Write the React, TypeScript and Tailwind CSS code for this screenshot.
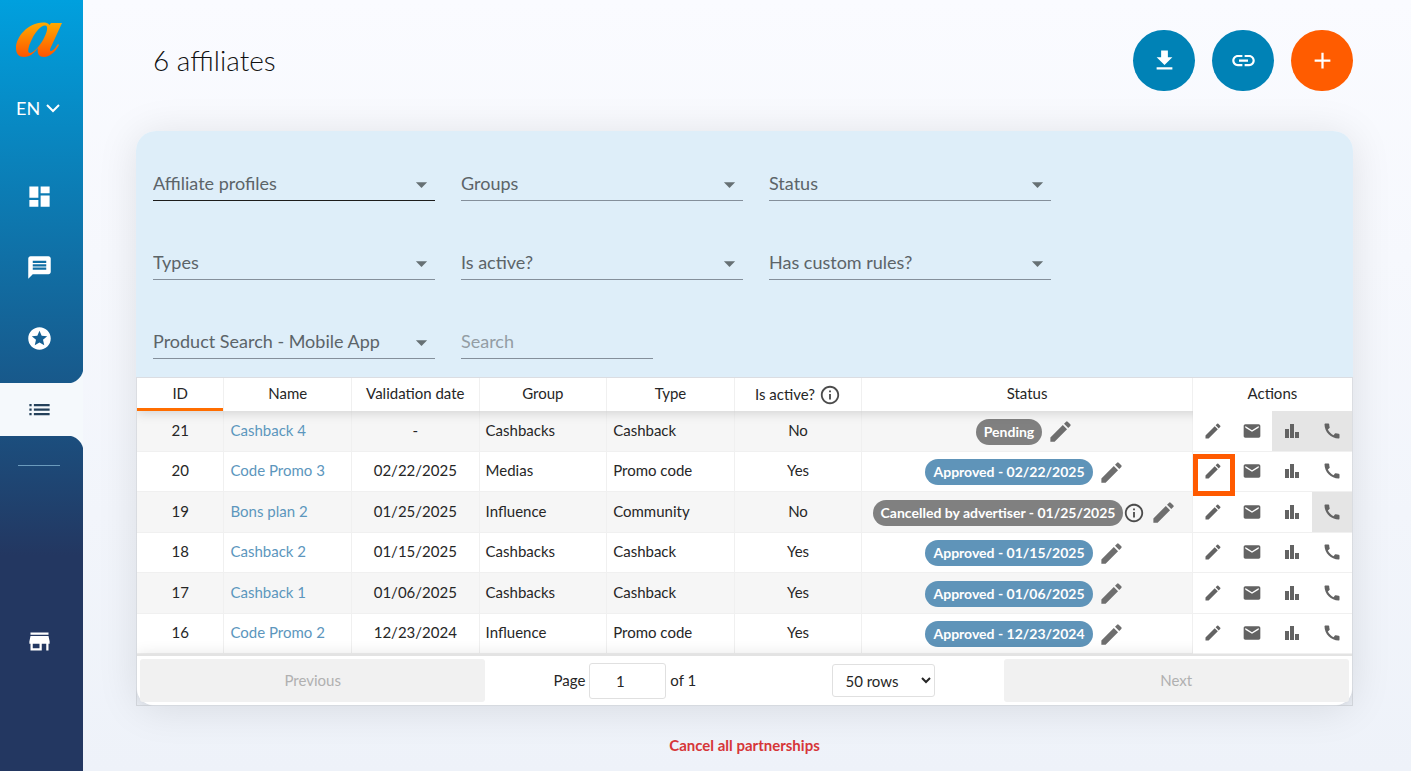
import type { ReactNode } from 'react'
import {
  MdAdd,
  MdArrowDropDown,
  MdCall,
  MdDashboard,
  MdEdit,
  MdEmail,
  MdFileDownload,
  MdInfoOutline,
  MdLink,
  MdList,
  MdMessage,
  MdStars,
  MdStore,
} from 'react-icons/md'

type Affiliate = {
  id: number
  name: string
  date: string
  group: string
  type: string
  active: boolean
  status: string
  approved: boolean
  info?: boolean
  disabled: string[]
}

const affiliates: Affiliate[] = [
  { id: 21, name: 'Cashback 4', date: '-', group: 'Cashbacks', type: 'Cashback', active: false, status: 'Pending', approved: false, disabled: ['stats', 'call'] },
  { id: 20, name: 'Code Promo 3', date: '02/22/2025', group: 'Medias', type: 'Promo code', active: true, status: 'Approved - 02/22/2025', approved: true, disabled: [] },
  { id: 19, name: 'Bons plan 2', date: '01/25/2025', group: 'Influence', type: 'Community', active: false, status: 'Cancelled by advertiser - 01/25/2025', approved: false, info: true, disabled: ['call'] },
  { id: 18, name: 'Cashback 2', date: '01/15/2025', group: 'Cashbacks', type: 'Cashback', active: true, status: 'Approved - 01/15/2025', approved: true, disabled: [] },
  { id: 17, name: 'Cashback 1', date: '01/06/2025', group: 'Cashbacks', type: 'Cashback', active: true, status: 'Approved - 01/06/2025', approved: true, disabled: [] },
  { id: 16, name: 'Code Promo 2', date: '12/23/2024', group: 'Influence', type: 'Promo code', active: true, status: 'Approved - 12/23/2024', approved: true, disabled: [] },
]

const filters = [
  'Affiliate profiles',
  'Groups',
  'Status',
  'Types',
  'Is active?',
  'Has custom rules?',
  'Product Search - Mobile App',
]

const HIGHLIGHTED_ID = 20

function Logo() {
  return (
    <svg viewBox="0 0 48 36" className="h-9 w-12" role="img" aria-label="Home">
      <defs>
        <linearGradient id="logo" x1="0" y1="0" x2="0" y2="1">
          <stop offset="0" stopColor="#ffab00" />
          <stop offset="1" stopColor="#ff5400" />
        </linearGradient>
      </defs>
      <path
        fill="url(#logo)"
        fillRule="evenodd"
        d="M47 1 L36 1 L34.5 3 C33 1 31 .5 28 .5 C13 .5 1 15 1 26 C1 32 4 35 9 35 C15 35 19 31 23 26 C22 32 24 35 29 35 C35 35 41 29 44 23 L43 22 C40 27 37 29.500 35.500 29 C34.500 28.500 35 27 36 25 Z M30 3.500 C34 3.500 32 11 28 18 C24 25 18 31 15 31 C12 31 13 25 17 17 C21 9 26 3.500 30 3.500 Z"
      />
    </svg>
  )
}

function ChevronDown({ className }: { className: string }) {
  return (
    <svg viewBox="0 0 14 14" fill="none" stroke="currentColor" strokeWidth="2" className={className} aria-hidden="true">
      <path d="M1 4l6 6 6-6" />
    </svg>
  )
}

function BarsIcon() {
  return (
    <svg viewBox="0 0 20 20" fill="currentColor" className="size-5" aria-hidden="true">
      <path d="M3 8h4v9H3zM8 3h4v14H8zM13 11h4v6h-4z" />
    </svg>
  )
}

function NavLink({ label, children }: { label: string; children: ReactNode }) {
  return (
    <a href="#" aria-label={label} className="flex h-[71px] w-full items-center justify-center pr-[5px] text-white">
      {children}
    </a>
  )
}

function Sidebar() {
  return (
    <aside className="flex w-[83px] shrink-0 flex-col bg-[linear-gradient(to_bottom,#00a0de_0%,#18588a_50%,#233761_72%)]">
      <a href="#" className="mt-[22px] pl-[15px]">
        <Logo />
      </a>
      <button type="button" className="mt-[34px] flex h-8 items-center gap-1.5 pl-4 text-lg text-white">
        EN
        <ChevronDown className="size-3.5" />
      </button>
      <nav className="mt-[37px] flex flex-col items-center">
        <NavLink label="Dashboard"><MdDashboard size={27} /></NavLink>
        <NavLink label="Messages"><MdMessage size={27} /></NavLink>
        <NavLink label="Programs"><MdStars size={27} /></NavLink>
        <a
          href="#"
          aria-label="Affiliates"
          aria-current="page"
          className="relative mt-[9px] flex h-[53px] w-full items-center justify-center bg-[#f5f9fc] pr-[5px] text-[#24415a] before:absolute before:-top-4 before:right-0 before:size-4 before:bg-[radial-gradient(circle_at_0_0,transparent_16px,#f5f9fc_17px)] after:absolute after:-bottom-4 after:right-0 after:size-4 after:bg-[radial-gradient(circle_at_0_100%,transparent_16px,#f5f9fc_17px)]"
        >
          <MdList size={27} />
        </a>
        <hr className="mt-[29px] mr-[5px] mb-[140px] w-[42px] border-[#6b9bbd]" />
        <NavLink label="Store"><MdStore size={27} /></NavLink>
      </nav>
    </aside>
  )
}

function RoundButton({ label, color, children }: { label: string; color: string; children: ReactNode }) {
  return (
    <button
      type="button"
      aria-label={label}
      className={`flex h-[61px] w-[62px] items-center justify-center rounded-full text-white ${color}`}
    >
      {children}
    </button>
  )
}

function FilterSelect({ label, focused }: { label: string; focused: boolean }) {
  return (
    <div className="relative w-[282px]">
      <select
        aria-label={label}
        className={`h-9 w-full appearance-none border-b bg-transparent text-lg text-[#5c6468] outline-none ${
          focused ? 'border-[#1c1c1c]' : 'border-[#848f9b]'
        }`}
      >
        <option>{label}</option>
      </select>
      <MdArrowDropDown size={27} className="pointer-events-none absolute top-1.5 right-0 text-[#667074]" />
    </div>
  )
}

function Filters() {
  return (
    <div className="flex flex-wrap gap-x-[26px] gap-y-[43px] rounded-t-[20px] bg-[#deeef9] px-[17px] pt-[34px] pb-[18px]">
      {filters.map((label, i) => (
        <FilterSelect key={label} label={label} focused={i === 0} />
      ))}
      <input
        type="text"
        aria-label="Search"
        placeholder="Search"
        className="h-9 w-48 border-b border-[#848f9b] bg-transparent text-lg outline-none placeholder:text-[#939da4]"
      />
    </div>
  )
}

function StatusCell({ row }: { row: Affiliate }) {
  return (
    <div className="flex items-center justify-center pt-1 pr-1 text-[#6e6e6e]">
      <span
        className={`rounded-full px-2 text-sm leading-[26px] font-bold whitespace-nowrap text-white ${
          row.approved ? 'bg-[#5f94b9]' : 'bg-[#808080]'
        }`}
      >
        {row.status}
      </span>
      {row.info && <MdInfoOutline size={22} className="text-[#4c4c4c]" />}
      <button type="button" aria-label={`Edit status of ${row.name}`} className="ml-[5px]">
        <MdEdit size={27} />
      </button>
    </div>
  )
}

function ActionsCell({ row }: { row: Affiliate }) {
  const actions = [
    { key: 'edit', icon: <MdEdit size={20} /> },
    { key: 'mail', icon: <MdEmail size={20} /> },
    { key: 'stats', icon: <BarsIcon /> },
    { key: 'call', icon: <MdCall size={20} /> },
  ]

  return (
    <div className="relative flex h-full text-[#636363]">
      {actions.map(({ key, icon }) => (
        <button
          key={key}
          type="button"
          aria-label={`${key} ${row.name}`}
          disabled={row.disabled.includes(key)}
          className="flex flex-1 items-center justify-center disabled:bg-[#e5e5e5]"
        >
          {icon}
        </button>
      ))}
      {row.id === HIGHLIGHTED_ID && (
        <span className="pointer-events-none absolute top-0.5 left-0 size-[42px] border-[5px] border-[#ff5a00]" />
      )}
    </div>
  )
}

function AffiliatesTable() {
  const head = 'border-r border-[#f0f0f0] px-0 pt-0 pb-0.5 font-normal'
  const cell = 'border-r border-b border-[#f0f0f0] px-1.5 pt-0 pb-0.5'

  return (
    <table className="h-[276px] w-full table-fixed border-separate border-spacing-0 text-[15px] text-[#262626]">
      <colgroup>
        <col className="w-[7.2%]" />
        <col className="w-[10.5%]" />
        <col className="w-[10.5%]" />
        <col className="w-[10.5%]" />
        <col className="w-[10.5%]" />
        <col className="w-[10.5%]" />
        <col className="w-[27.2%]" />
        <col className="w-[13.1%]" />
      </colgroup>
      <thead className="relative z-10 shadow-[0_2px_12px_rgba(0,0,0,0.15)]">
        <tr className="h-[33px] bg-white">
          <th className={`${head} shadow-[inset_0_-3px_0_#ff6d00]`}>ID</th>
          <th className={head}>Name</th>
          <th className={head}>Validation date</th>
          <th className={head}>Group</th>
          <th className={head}>Type</th>
          <th className={head}>
            <span className="flex items-center justify-center gap-1 pt-0.5">
              Is active? <MdInfoOutline size={22} className="text-[#4c4c4c]" />
            </span>
          </th>
          <th className={head}>Status</th>
          <th className="px-0 pt-0 pb-0.5 font-normal">Actions</th>
        </tr>
      </thead>
      <tbody>
        {affiliates.map((row) => (
          <tr key={row.id} className="h-10 bg-white odd:bg-[#f6f6f6]">
            <td className={`${cell} text-center`}>{row.id}</td>
            <td className={cell}>
              <a href="#" className="text-[#5c96bd]">{row.name}</a>
            </td>
            <td className={`${cell} text-center`}>{row.date}</td>
            <td className={cell}>{row.group}</td>
            <td className={cell}>{row.type}</td>
            <td className={`${cell} text-center`}>{row.active ? 'Yes' : 'No'}</td>
            <td className={cell}>
              <StatusCell row={row} />
            </td>
            <td
              className={`relative h-10 border-b border-[#f0f0f0] bg-white p-0 ${
                row.id === HIGHLIGHTED_ID ? 'z-30' : 'z-20'
              }`}
            >
              <ActionsCell row={row} />
            </td>
          </tr>
        ))}
      </tbody>
    </table>
  )
}

function Pagination() {
  const pageButton = 'h-[43px] flex-1 rounded-[3px] bg-[#f1f1f1] text-[#b0b0b0]'

  return (
    <div className="relative z-10 flex items-center rounded-b-[16px] border-t-2 border-[#e3e3e3] bg-white p-[3px] text-[15px] text-[#262626] shadow-[0_0_15px_rgba(0,0,0,0.1)]">
      <button type="button" disabled className={pageButton}>Previous</button>
      <div className="flex flex-[1.5] items-center justify-around">
        <label className="flex items-center gap-1">
          Page
          <input
            type="number"
            defaultValue={1}
            aria-label="Page number"
            className="h-9 w-[77px] rounded-[3px] border border-[#e0e0e0] text-center"
          />
          of 1
        </label>
        <select
          aria-label="Rows per page"
          className="h-[33px] w-[103px] rounded-[3px] border border-[#e0e0e0] bg-white px-2"
        >
          <option>50 rows</option>
        </select>
      </div>
      <button type="button" disabled className={pageButton}>Next</button>
    </div>
  )
}

export default function App() {
  return (
    <div className="flex min-h-screen bg-[linear-gradient(to_bottom,#fafbff,#eef2f9)] font-[Lato,sans-serif]">
      <Sidebar />
      <main className="min-w-0 flex-1 pr-[58px] pl-[53px]">
        <header className="flex items-center justify-between pt-[30px] pl-[17px]">
          <h1 className="pb-0.5 text-[28px] font-light text-[#111]">6 affiliates</h1>
          <div className="flex gap-[17px]">
            <RoundButton label="Download" color="bg-[#0082b6]"><MdFileDownload size={27} /></RoundButton>
            <RoundButton label="Copy link" color="bg-[#0082b6]"><MdLink size={27} /></RoundButton>
            <RoundButton label="Add affiliate" color="bg-[#ff5c00]"><MdAdd size={27} /></RoundButton>
          </div>
        </header>

        <section className="mt-10 rounded-[20px] shadow-[0_3px_40px_rgba(0,0,0,0.1)]">
          <Filters />
          <div className="overflow-hidden border border-black/10">
            <AffiliatesTable />
            <Pagination />
          </div>
        </section>

        <button type="button" className="mx-auto mt-7 block text-[15px] font-bold text-[#d63638]">
          Cancel all partnerships
        </button>
      </main>
    </div>
  )
}
